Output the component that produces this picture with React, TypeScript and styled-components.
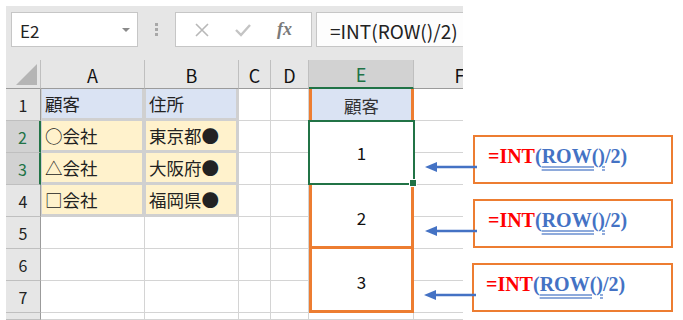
import styled, { createGlobalStyle } from 'styled-components';

const GlobalStyle = createGlobalStyle`
  html, body {
    margin: 0;
    padding: 0;
    background: #ffffff;
  }
  body {
    font-family: "Noto Sans CJK JP", "Liberation Sans", sans-serif;
    color: #000;
  }
`;

const colors = {
  band: '#e6e6e6',
  headerActive: '#d2d2d2',
  grid: '#d4d4d4',
  headerLine: '#bfbfbf',
  headerEdge: '#9b9b9b',
  green: '#217346',
  orange: '#ed7d31',
  blueFill: '#dae3f3',
  beigeFill: '#fff2cc',
  tableLine: '#d0d0d0',
  arrow: '#4472c4',
};

const Page = styled.div`
  display: flex;
  align-items: flex-start;
  width: 683px;
  height: 320px;
  overflow: hidden;
`;

const Sheet = styled.div`
  margin: 6px 0 0 6px;
  width: 457px;
  height: 314px;
  overflow: hidden;
  background: ${colors.band};
`;

const FormulaBar = styled.div`
  display: flex;
  align-items: center;
  height: 54px;
  padding: 0 0 7px 5px;
  box-sizing: border-box;
`;

const NameBox = styled.div`
  display: flex;
  align-items: center;
  justify-content: space-between;
  width: 127px;
  height: 35px;
  box-sizing: border-box;
  background: #fff;
  border: 1px solid #c6c6c6;
  padding: 2px 7px 0 8px;
  font-size: 17px;
  color: #222;
`;

const DropArrow = styled.span`
  width: 0;
  height: 0;
  border-left: 4px solid transparent;
  border-right: 4px solid transparent;
  border-top: 4px solid #8a8a8a;
  margin-top: -2px;
`;

const Grip = styled.div`
  display: flex;
  flex-direction: column;
  justify-content: center;
  align-items: center;
  gap: 2px;
  width: 37px;
  span {
    width: 3px;
    height: 3px;
    background: #a8a8a8;
  }
`;

const ButtonBox = styled.div`
  display: flex;
  align-items: center;
  justify-content: space-around;
  width: 137px;
  height: 35px;
  box-sizing: border-box;
  background: #fff;
  border: 1px solid #c6c6c6;
  padding: 0 6px;
`;

const FxLabel = styled.span`
  font-family: "Liberation Serif", serif;
  font-style: italic;
  font-weight: bold;
  font-size: 18px;
  color: #7a7a7a;
`;

const FormulaInput = styled.div`
  display: flex;
  align-items: center;
  margin-left: 4px;
  flex: 1;
  height: 35px;
  box-sizing: border-box;
  background: #fdfdfd;
  border: 1px solid #c6c6c6;
  border-right: none;
  padding: 1px 0 0 13px;
  font-size: 19px;
  white-space: nowrap;
  color: #222;
`;

const Grid = styled.div`
  display: grid;
  grid-template-columns: 35px 104px 94px 32px 38px 105px 92px;
  grid-template-rows: 29px repeat(7, 32px) 7px;
  background: #fff;
`;

const Corner = styled.div`
  position: relative;
  background: ${colors.band};
  border-right: 1px solid ${colors.headerLine};
  border-bottom: 1px solid ${colors.headerEdge};
  &::after {
    content: '';
    position: absolute;
    right: 3px;
    bottom: 3px;
    width: 21px;
    height: 21px;
    background: #b5b5b5;
    clip-path: polygon(100% 0, 100% 100%, 0 100%);
  }
`;

const ColHeader = styled.div<{ $active?: boolean }>`
  display: flex;
  align-items: center;
  justify-content: center;
  box-sizing: border-box;
  background: ${(p) => (p.$active ? colors.headerActive : colors.band)};
  color: ${(p) => (p.$active ? colors.green : '#111')};
  border-right: 1px solid ${colors.headerLine};
  border-bottom: ${(p) =>
    p.$active ? `2px solid ${colors.green}` : `1px solid ${colors.headerEdge}`};
  font-size: 18px;
  padding-top: 1px;
`;

const RowHeader = styled.div<{ $active?: boolean }>`
  display: flex;
  align-items: center;
  justify-content: center;
  box-sizing: border-box;
  background: ${(p) => (p.$active ? colors.headerActive : colors.band)};
  color: ${(p) => (p.$active ? colors.green : '#222')};
  border-bottom: 1px solid ${colors.headerLine};
  border-right: ${(p) =>
    p.$active ? `2px solid ${colors.green}` : `1px solid ${colors.headerEdge}`};
  font-size: 16px;
`;

const Cell = styled.div`
  box-sizing: border-box;
  border-right: 1px solid ${colors.grid};
  border-bottom: 1px solid ${colors.grid};
`;

const DataCell = styled.div<{ $fill: string }>`
  display: flex;
  align-items: center;
  box-sizing: border-box;
  padding: 0 0 0 3px;
  background: ${(p) => p.$fill};
  border-left: 1px solid ${colors.tableLine};
  border-right: 3px solid ${colors.tableLine};
  border-bottom: 3px solid ${colors.tableLine};
  font-size: 17.5px;
  white-space: nowrap;
  color: #222;
`;

const TitleCell = styled.div<{ $row: number }>`
  grid-column: 6;
  grid-row: ${(p) => p.$row};
  display: flex;
  align-items: center;
  justify-content: center;
  box-sizing: border-box;
  background: ${colors.blueFill};
  border-left: 3px solid ${colors.orange};
  border-right: 3px solid ${colors.orange};
  font-size: 17.5px;
  color: #333;
`;

const MergedCell = styled.div<{ $row: number; $selected?: boolean }>`
  position: relative;
  z-index: ${(p) => (p.$selected ? 2 : 1)};
  grid-column: 6;
  grid-row: ${(p) => p.$row} / span 2;
  display: flex;
  align-items: center;
  justify-content: center;
  box-sizing: border-box;
  background: #fff;
  border: ${(p) =>
    p.$selected ? `2px solid ${colors.green}` : `3px solid ${colors.orange}`};
  border-top-width: ${(p) => (p.$selected ? '2px' : '0')};
  margin: ${(p) => (p.$selected ? '-1px -1px 0 -1px' : '0')};
  padding-top: ${(p) => (p.$selected ? '0' : '3px')};
  font-size: 17px;
  color: #111;
`;

const FillHandle = styled.span`
  position: absolute;
  right: -4px;
  bottom: -4px;
  width: 6px;
  height: 6px;
  background: ${colors.green};
  border: 1px solid #fff;
`;

const Notes = styled.div`
  display: flex;
  flex-direction: column;
  gap: 15px;
  margin: 135px 0 0 10px;
`;

const Note = styled.div<{ $shift?: number }>`
  position: relative;
  display: flex;
  align-items: center;
  width: ${(p) => 200 + (p.$shift ?? 0)}px;
  height: 49px;
  margin-left: ${(p) => -(p.$shift ?? 0)}px;
  box-sizing: border-box;
  border: 2px solid ${colors.orange};
  padding: 0 0 6px ${(p) => 13 - (p.$shift ?? 0)}px;
  font-family: "Liberation Serif", serif;
  font-weight: bold;
  font-size: 20px;
  white-space: nowrap;
`;

const Red = styled.span`
  color: #ff0000;
`;

const Blue = styled.span`
  color: ${colors.arrow};
`;

const Underlined = styled.span`
  text-decoration: underline double #8eaadb;
  text-underline-offset: 3px;
`;

const Arrow = styled.svg`
  position: absolute;
  left: -50px;
  top: 23px;
  width: 50px;
  height: 14px;
  overflow: visible;
`;

const cols = ['A', 'B', 'C', 'D', 'E', 'F'];

const tableRows = [
  { name: '顧客', place: '住所', fill: colors.blueFill },
  { name: '○会社', place: '東京都●', fill: colors.beigeFill },
  { name: '△会社', place: '大阪府●', fill: colors.beigeFill },
  { name: '□会社', place: '福岡県●', fill: colors.beigeFill },
];

const NoteArrow = () => (
  <Arrow viewBox="0 0 50 14">
    <line x1="10" y1="7" x2="52" y2="7" stroke={colors.arrow} strokeWidth="2.5" />
    <polygon points="0,7 12,2 12,12" fill={colors.arrow} />
  </Arrow>
);

const Formula = () => (
  <>
    <Red>=INT</Red>
    <Blue>
      (<Underlined>ROW()</Underlined>/2)
    </Blue>
  </>
);

export default function App() {
  const rowNumbers = [1, 2, 3, 4, 5, 6, 7, 8];

  return (
    <>
      <GlobalStyle />
      <Page>
        <Sheet>
          <FormulaBar>
            <NameBox>
              E2
              <DropArrow />
            </NameBox>
            <Grip>
              <span />
              <span />
              <span />
            </Grip>
            <ButtonBox>
              <svg width="14" height="14" viewBox="0 0 14 14">
                <path d="M1 1 L13 13 M13 1 L1 13" stroke="#b8b8b8" strokeWidth="1.6" />
              </svg>
              <svg width="16" height="14" viewBox="0 0 16 14">
                <path d="M1 7 L6 12 L15 2" stroke="#c4c4c4" strokeWidth="2.4" fill="none" />
              </svg>
              <FxLabel>fx</FxLabel>
            </ButtonBox>
            <FormulaInput>=INT(ROW()/2)</FormulaInput>
          </FormulaBar>

          <Grid>
            <Corner />
            {cols.map((c) => (
              <ColHeader key={c} $active={c === 'E'}>
                {c}
              </ColHeader>
            ))}

            {rowNumbers.map((n) => {
              const row = n + 1;
              const t = tableRows[n - 1];
              return [
                <RowHeader key={`h${n}`} $active={n === 2 || n === 3} style={{ gridRow: row, gridColumn: 1 }}>
                  {n < 8 ? n : ''}
                </RowHeader>,
                t ? (
                  <DataCell key={`a${n}`} $fill={t.fill} style={{ gridRow: row, gridColumn: 2 }}>
                    {t.name}
                  </DataCell>
                ) : (
                  <Cell key={`a${n}`} style={{ gridRow: row, gridColumn: 2 }} />
                ),
                t ? (
                  <DataCell key={`b${n}`} $fill={t.fill} style={{ gridRow: row, gridColumn: 3 }}>
                    {t.place}
                  </DataCell>
                ) : (
                  <Cell key={`b${n}`} style={{ gridRow: row, gridColumn: 3 }} />
                ),
                <Cell key={`c${n}`} style={{ gridRow: row, gridColumn: 4 }} />,
                <Cell key={`d${n}`} style={{ gridRow: row, gridColumn: 5 }} />,
                n === 8 ? <Cell key={`e${n}`} style={{ gridRow: row, gridColumn: 6 }} /> : null,
                <Cell key={`f${n}`} style={{ gridRow: row, gridColumn: 7 }} />,
              ];
            })}

            <TitleCell $row={2}>顧客</TitleCell>
            <MergedCell $row={3} $selected>
              1
              <FillHandle />
            </MergedCell>
            <MergedCell $row={5}>2</MergedCell>
            <MergedCell $row={7}>3</MergedCell>
          </Grid>
        </Sheet>

        <Notes>
          {[0, 0, 1].map((shift, i) => (
            <Note key={i} $shift={shift}>
              <NoteArrow />
              <Formula />
            </Note>
          ))}
        </Notes>
      </Page>
    </>
  );
}
